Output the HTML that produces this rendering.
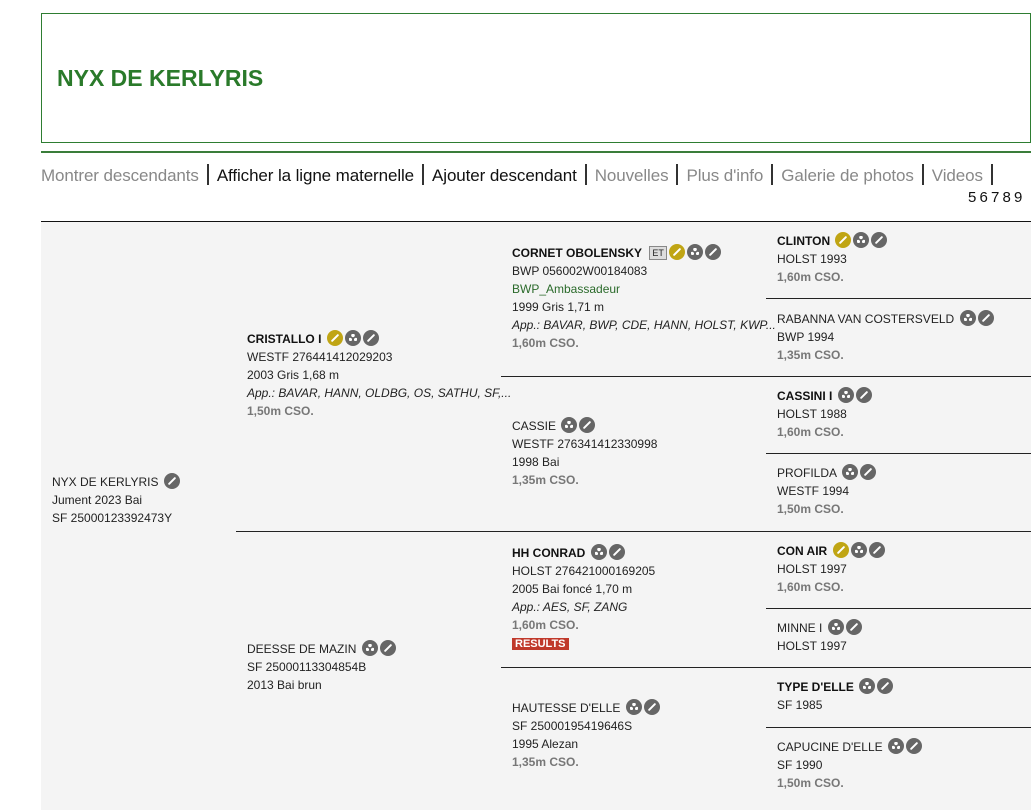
<!DOCTYPE html>
<html><head><meta charset="utf-8"><style>
body{margin:0;width:1033px;height:809px;overflow:hidden;background:#fff;font-family:"Liberation Sans",sans-serif;font-size:12px;color:#222;position:relative}
.hdr{position:absolute;left:41px;top:13px;width:988px;height:128px;border:1px solid #2e7d32}
.hdr h1{position:absolute;left:15px;top:51px;margin:0;font-size:23px;color:#2a7a2a;font-weight:bold}
.gl{position:absolute;left:41px;top:151px;width:990px;height:2px;background:#3a7d3a}
.nav{position:absolute;left:41px;top:164px;font-size:17px;color:#888;white-space:nowrap;letter-spacing:-0.1px}
.nav b{font-weight:normal;color:#111}
.nav i{font-style:normal;display:inline-block;width:2px;height:21px;background:#333;vertical-align:-4px;margin:0 8px}
.pg{position:absolute;left:968px;top:189px;font-size:15px;color:#111;word-spacing:-1px}
.area{position:absolute;left:41px;top:221px;width:990px;height:588px;background:#f4f4f4;border-top:1px solid #111}
.h{position:absolute;height:1px;background:#222}
.e{position:absolute;line-height:18px;white-space:nowrap}
.e .n{font-weight:bold;color:#111}
.g{color:#777;font-weight:bold}
.it{font-style:italic}
.ic{display:inline-block;width:16px;height:16px;border-radius:50%;background:#666;vertical-align:-3px;margin-left:2px;position:relative}
.ic.y{background:#c0a514}
.ic::after{content:"";position:absolute;left:7px;top:3px;width:2px;height:10px;background:#fff;transform:rotate(45deg);border-radius:1px}
.ic.t::after{left:4px;top:4px;width:8px;height:7px;transform:none;background:radial-gradient(circle at 50% 20%,#fff 1.6px,transparent 2px),radial-gradient(circle at 15% 80%,#fff 1.6px,transparent 2px),radial-gradient(circle at 85% 80%,#fff 1.6px,transparent 2px)}
.et{display:inline-block;font-size:9px;border:1px solid #888;background:#ddd;padding:0 2px;line-height:12px;vertical-align:1px;margin-left:4px}
.res{display:inline-block;background:#c0392b;color:#fff;font-weight:bold;font-size:11px;line-height:12px;padding:0 3px}
</style></head><body>
<div class="hdr"><h1>NYX DE KERLYRIS</h1></div>
<div class="gl"></div>
<div class="nav">Montrer descendants<i></i><b>Afficher la ligne maternelle</b><i></i><b>Ajouter descendant</b><i></i>Nouvelles<i></i>Plus d'info<i></i>Galerie de photos<i></i>Videos<i></i></div>
<div class="pg">5 6 7 8 9</div>
<div class="area"></div>
<div class="h" style="left:236px;top:531px;width:795px"></div>
<div class="h" style="left:501px;top:376px;width:530px"></div>
<div class="h" style="left:501px;top:667px;width:530px"></div>
<div class="h" style="left:766px;top:298px;width:265px"></div>
<div class="h" style="left:766px;top:453px;width:265px"></div>
<div class="h" style="left:766px;top:608px;width:265px"></div>
<div class="h" style="left:766px;top:727px;width:265px"></div>

<div class="e" style="left:52px;top:473px">NYX DE KERLYRIS <span class="ic"></span><br>Jument 2023 Bai<br>SF 25000123392473Y</div>

<div class="e" style="left:247px;top:330px"><span class="n">CRISTALLO I</span> <span class="ic y"></span><span class="ic t"></span><span class="ic"></span><br>WESTF 276441412029203<br>2003 Gris 1,68 m<br><span class="it">App.: BAVAR, HANN, OLDBG, OS, SATHU, SF,...</span><br><span class="g">1,50m CSO.</span></div>
<div class="e" style="left:247px;top:640px">DEESSE DE MAZIN <span class="ic t"></span><span class="ic"></span><br>SF 25000113304854B<br>2013 Bai brun</div>

<div class="e" style="left:512px;top:244px"><span class="n">CORNET OBOLENSKY</span> <span class="et">ET</span><span class="ic y"></span><span class="ic t"></span><span class="ic"></span><br>BWP 056002W00184083<br><span style="color:#2a6a2a">BWP_Ambassadeur</span><br>1999 Gris 1,71 m<br><span class="it">App.: BAVAR, BWP, CDE, HANN, HOLST, KWP...</span><br><span class="g">1,60m CSO.</span></div>
<div class="e" style="left:512px;top:417px">CASSIE <span class="ic t"></span><span class="ic"></span><br>WESTF 276341412330998<br>1998 Bai<br><span class="g">1,35m CSO.</span></div>
<div class="e" style="left:512px;top:544px"><span class="n">HH CONRAD</span> <span class="ic t"></span><span class="ic"></span><br>HOLST 276421000169205<br>2005 Bai foncé 1,70 m<br><span class="it">App.: AES, SF, ZANG</span><br><span class="g">1,60m CSO.</span><br><span class="res">RESULTS</span></div>
<div class="e" style="left:512px;top:699px">HAUTESSE D'ELLE <span class="ic t"></span><span class="ic"></span><br>SF 25000195419646S<br>1995 Alezan<br><span class="g">1,35m CSO.</span></div>

<div class="e" style="left:777px;top:232px"><span class="n">CLINTON</span> <span class="ic y"></span><span class="ic t"></span><span class="ic"></span><br>HOLST 1993<br><span class="g">1,60m CSO.</span></div>
<div class="e" style="left:777px;top:310px">RABANNA VAN COSTERSVELD <span class="ic t"></span><span class="ic"></span><br>BWP 1994<br><span class="g">1,35m CSO.</span></div>
<div class="e" style="left:777px;top:387px"><span class="n">CASSINI I</span> <span class="ic t"></span><span class="ic"></span><br>HOLST 1988<br><span class="g">1,60m CSO.</span></div>
<div class="e" style="left:777px;top:464px">PROFILDA <span class="ic t"></span><span class="ic"></span><br>WESTF 1994<br><span class="g">1,50m CSO.</span></div>
<div class="e" style="left:777px;top:542px"><span class="n">CON AIR</span> <span class="ic y"></span><span class="ic t"></span><span class="ic"></span><br>HOLST 1997<br><span class="g">1,60m CSO.</span></div>
<div class="e" style="left:777px;top:619px">MINNE I <span class="ic t"></span><span class="ic"></span><br>HOLST 1997</div>
<div class="e" style="left:777px;top:678px"><span class="n">TYPE D'ELLE</span> <span class="ic t"></span><span class="ic"></span><br>SF 1985</div>
<div class="e" style="left:777px;top:738px">CAPUCINE D'ELLE <span class="ic t"></span><span class="ic"></span><br>SF 1990<br><span class="g">1,50m CSO.</span></div>
</body></html>
